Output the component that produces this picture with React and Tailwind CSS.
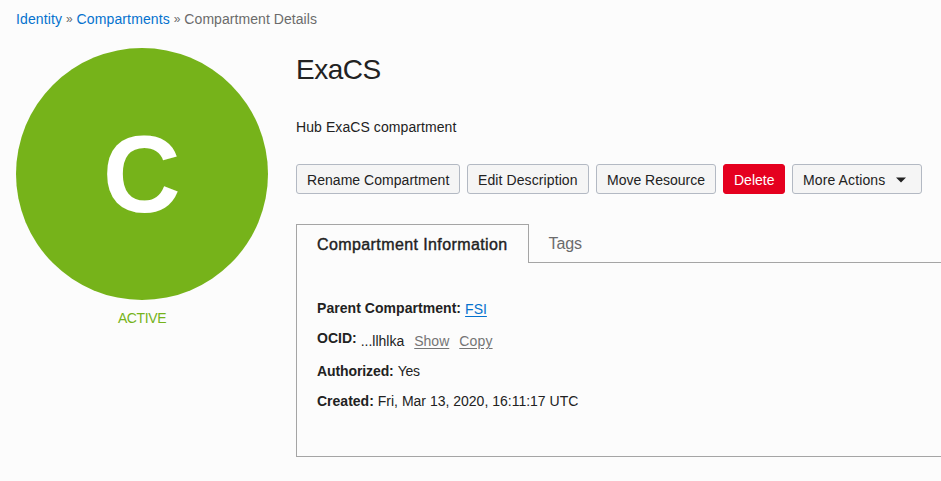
const actionBase =
  'flex h-[30px] items-center whitespace-nowrap rounded-[3px] border px-2.5 pt-0.5 text-sm leading-5';
const neutral = 'border-[#b3b9c3] bg-[#f5f5f5] text-[#222]';

function Breadcrumb() {
  return (
    <nav className="flex h-12 items-start gap-1 whitespace-pre pl-4 pt-[9px] text-sm leading-5 text-[#6b6b6b]">
      <a className="tracking-[0.12px] text-[#0572ce]">Identity</a>
      <span className="w-[6.5px] text-xs leading-5">»</span>
      <a className="tracking-[0.12px] text-[#0572ce]">Compartments</a>
      <span className="w-[6.5px] text-xs leading-5">»</span>
      <span className="tracking-[0.06px]">Compartment Details</span>
    </nav>
  );
}

function StatusBadge() {
  return (
    <aside className="flex w-[252px] shrink-0 flex-col items-center">
      <div className="flex size-[252px] items-center justify-center rounded-full bg-[#76b31a] text-[110px] font-bold leading-none text-white">
        <span className="scale-x-[0.98]">C</span>
      </div>
      <span className="mt-2 text-sm leading-5 tracking-[-0.4px] text-[#76b31a]">ACTIVE</span>
    </aside>
  );
}

function Actions() {
  return (
    <div className="mt-[27px] flex gap-[7px]">
      <button className={`${actionBase} ${neutral} w-[164px] tracking-[0.04px]`}>Rename Compartment</button>
      <button className={`${actionBase} ${neutral} w-[122px] tracking-[0.1px]`}>Edit Description</button>
      <button className={`${actionBase} ${neutral} w-[120px]`}>Move Resource</button>
      <button className={`${actionBase} w-[62px] border-[#e5001f] bg-[#e5001f] text-white`}>Delete</button>
      <button className={`${actionBase} ${neutral} w-[130px] justify-between pr-[15px] tracking-[0.12px]`}>
        More Actions
        <svg width="10" height="6" viewBox="0 0 10 6" className="fill-[#222]">
          <path d="M0 0.5h10L5 5.5z" />
        </svg>
      </button>
    </div>
  );
}

function Details() {
  return (
    <section className="mt-[30px]">
      <div className="flex h-[39px]">
        <div className="w-[233px] whitespace-nowrap border-x border-t border-[#a5a5a5] pl-5 pt-2 text-base leading-6 tracking-[0.4px] text-[#222] [-webkit-text-stroke:0.4px_#222]">
          Compartment Information
        </div>
        <div className="flex-1 border-b border-[#a5a5a5] pl-[19.5px] pt-2 text-base leading-6 tracking-[-0.1px] text-[#6b6b6b]">
          Tags
        </div>
      </div>
      <div className="h-[194px] border-b border-l border-[#a5a5a5] pl-5 pt-[35px] text-sm leading-5 text-[#222]">
        <div className="flex h-[30px] gap-1">
          <b className="tracking-[0.05px]">Parent Compartment:</b>
          <a className="mt-px text-[#0572ce] underline underline-offset-2">FSI</a>
        </div>
        <div className="flex h-[33px] gap-1">
          <b>OCID:</b>
          <span className="mt-[3px]">...llhlka</span>
          <a className="ml-1.5 mt-[3px] text-[#757575] underline underline-offset-2">Show</a>
          <a className="ml-1.5 mt-[3px] tracking-[0.15px] text-[#757575] underline underline-offset-2">Copy</a>
        </div>
        <div className="flex h-[30px] gap-1">
          <b className="tracking-[-0.1px]">Authorized:</b>
          <span className="tracking-[-0.3px]">Yes</span>
        </div>
        <div className="flex h-[30px] gap-1">
          <b>Created:</b>
          <span>Fri, Mar 13, 2020, 16:11:17 UTC</span>
        </div>
      </div>
    </section>
  );
}

export default function App() {
  return (
    <div className="h-[481px] w-[941px] overflow-hidden bg-[#fcfcfc] font-['Liberation_Sans',Arial,sans-serif]">
      <Breadcrumb />
      <div className="flex gap-7 pl-4">
        <StatusBadge />
        <main className="min-w-0 flex-1">
          <h1 className="pt-1.5 text-[28px] leading-8 tracking-[-0.5px] text-[#222]">ExaCS</h1>
          <p className="mt-[31px] text-sm leading-5 tracking-[0.08px] text-[#222]">Hub ExaCS compartment</p>
          <Actions />
          <Details />
        </main>
      </div>
    </div>
  );
}
